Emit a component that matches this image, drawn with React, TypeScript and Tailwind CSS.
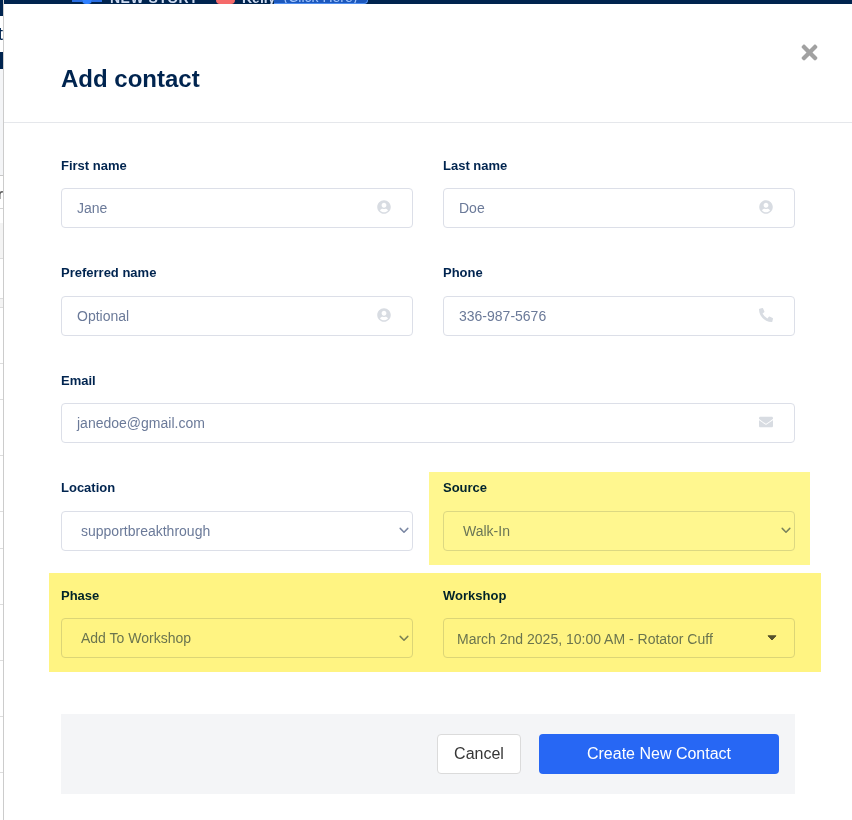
import React from "react";
import { FaTimes, FaUserCircle, FaPhoneAlt, FaEnvelope } from "react-icons/fa";

const sans = { fontFamily: '"Liberation Sans", Arial, sans-serif' };

function Field({ label, children, className = "" }: { label: string; children: React.ReactNode; className?: string }) {
  return (
    <div className={className}>
      <div className="h-5 mb-[12.5px] text-[13px] leading-5 font-bold text-[#00244f]">{label}</div>
      {children}
    </div>
  );
}

function TextInput({ value, icon }: { value: string; icon: React.ReactNode }) {
  return (
    <div className="h-10 flex items-center justify-between rounded border border-[#dcdfe8] bg-white pl-[15px] pr-[21px] text-sm text-[#6b7a99]">
      <span>{value}</span>
      <span className="text-[#d8dce2] text-sm -mt-[2px]">{icon}</span>
    </div>
  );
}

function SelectBox({ value }: { value: string }) {
  return (
    <div className="h-10 flex items-center justify-between rounded border border-[#dcdfe8] bg-white pl-[19px] pr-[3px] text-sm text-[#6b7a99]">
      <span>{value}</span>
      <svg width="10" height="7" viewBox="0 0 10 7" fill="none" stroke="#7a87a3" strokeWidth="1.5" strokeLinecap="round" strokeLinejoin="round">
        <path d="M1.2 1.4 5 5.2l3.8-3.8" />
      </svg>
    </div>
  );
}

function Strip() {
  return (
    <div className="w-1 h-full shrink-0 flex flex-col border-r border-[#cccccc] overflow-hidden bg-white">
      <div className="h-4 bg-[#00244f] shrink-0" />
      <div className="h-9 shrink-0 flex items-center justify-end text-lg leading-none text-[#00244f]">t</div>
      <div className="h-[17px] bg-[#00244f] shrink-0" />
      <div className="h-[107px] bg-[#f4f5f7] border-b border-[#c8c8c8] shrink-0" />
      <div className="h-[33px] border-b border-[#d4d4d4] shrink-0 flex items-center justify-end text-[#444] text-sm font-bold pt-[3px]">r</div>
      <div className="h-[14px] shrink-0" />
      <div className="h-9 bg-[#f4f4f4] border-b border-[#dddddd] shrink-0" />
      <div className="h-[40px] border-b border-[#dddddd] shrink-0" />
      <div className="h-[9px] bg-[#f4f4f4] border-b border-[#dddddd] shrink-0" />
      <div className="h-[56px] border-b border-[#dddddd] shrink-0" />
      <div className="h-[36px] border-b border-[#dddddd] shrink-0" />
      <div className="h-[56px] border-b border-[#dddddd] shrink-0" />
      <div className="h-[56px] border-b border-[#dddddd] shrink-0" />
      <div className="h-[37px] border-b border-[#dddddd] shrink-0" />
      <div className="h-[56px] border-b border-[#dddddd] shrink-0" />
      <div className="h-[56px] border-b border-[#dddddd] shrink-0" />
      <div className="h-[56px] border-b border-[#dddddd] shrink-0" />
      <div className="h-[56px] border-b border-[#dddddd] shrink-0" />
    </div>
  );
}

function TopBar() {
  return (
    <div className="h-1 shrink-0 bg-[#00244f] flex items-end overflow-hidden text-[#cfdcf2] text-sm leading-none font-bold whitespace-nowrap">
      <div className="ml-[68px] w-[10px] h-[2px] self-start bg-[#2a6de0]" />
      <div className="w-[10px] h-[4px] bg-[#2f80ff] rounded-b-full" />
      <div className="w-[10px] h-[2px] self-start bg-[#2a6de0]" />
      <span className="ml-[8px] w-[88px] -mb-[1px] tracking-[0.5px]">NEW STORY</span>
      <div className="ml-[18px] w-[19px] h-[4px] bg-[#f56a6a] rounded-b-full" />
      <span className="ml-[7px] w-[30px] -mb-[1px]">Kelly</span>
      <div className="ml-[2px] w-[94px] h-[4px] bg-[#1c58bd] border-b border-r border-[#4f8df0] rounded-br flex justify-center items-end overflow-hidden">
        <span className="font-normal text-[#9fc2fa] -mb-[1px]">(Click Here)</span>
      </div>
    </div>
  );
}

export default function App() {
  const user = <FaUserCircle />;
  return (
    <div className="relative flex w-[852px] h-[820px] overflow-hidden bg-white" style={sans}>
      <Strip />
      <div className="flex-1 flex flex-col min-w-0">
        <TopBar />
        <div className="flex-1 bg-white relative">
          <div className="h-[118px] border-b border-[#e5e7eb] box-content -mb-px flex justify-between px-[57px]">
            <h2 className="mt-[60px] text-2xl leading-[30px] font-bold text-[#00244f] h-[30px]">Add contact</h2>
            <button className="-mr-[26px] mt-[36px] h-6 text-[#a1a1a1] text-[23px] leading-none self-start">
              <FaTimes />
            </button>
          </div>
          <div className="pt-[33.75px] pl-[57px] pr-[57px]">
            <div className="grid grid-cols-2 gap-x-[30px] gap-y-[35px]">
              <Field label="First name"><TextInput value="Jane" icon={user} /></Field>
              <Field label="Last name"><TextInput value="Doe" icon={user} /></Field>
              <Field label="Preferred name"><TextInput value="Optional" icon={user} /></Field>
              <Field label="Phone"><TextInput value="336-987-5676" icon={<FaPhoneAlt />} /></Field>
              <Field label="Email" className="col-span-2"><TextInput value="janedoe@gmail.com" icon={<FaEnvelope />} /></Field>
              <Field label="Location"><SelectBox value="supportbreakthrough" /></Field>
              <Field label="Source" className="relative">
                <SelectBox value="Walk-In" />
                <div className="absolute -left-[14px] -right-[15px] -top-[6.25px] -bottom-[14.25px] bg-[#fff78f] mix-blend-multiply pointer-events-none" />
              </Field>
              <div className="col-span-2 relative grid grid-cols-2 gap-x-[30px]">
                <Field label="Phase"><SelectBox value="Add To Workshop" /></Field>
                <Field label="Workshop">
                  <div className="h-10 flex items-center justify-between rounded border border-[#dcdfe8] bg-white pl-[13px] pr-[17px] text-sm text-[#6b7a99]">
                    <span className="mt-[2px]">March 2nd 2025, 10:00 AM - Rotator Cuff</span>
                    <svg width="10" height="6" viewBox="0 0 10 6" fill="#555555" stroke="#555555" strokeLinejoin="round">
                      <path d="M1 .8h8L5 5z" />
                    </svg>
                  </div>
                </Field>
                <div className="absolute -left-3 -right-[26px] -top-[12.75px] -bottom-[13.4px] bg-[#fff482] mix-blend-multiply pointer-events-none" />
              </div>
            </div>
            <div className="mt-[55.75px] h-20 bg-[#f4f5f7] flex items-center justify-end gap-[18px] pr-4">
              <button className="w-[84px] h-10 rounded border border-[#dbdbdb] bg-white text-base text-[#363636]">Cancel</button>
              <button className="w-[240px] h-10 rounded bg-[#2767f4] text-base text-white">Create New Contact</button>
            </div>
          </div>
        </div>
      </div>
    </div>
  );
}
